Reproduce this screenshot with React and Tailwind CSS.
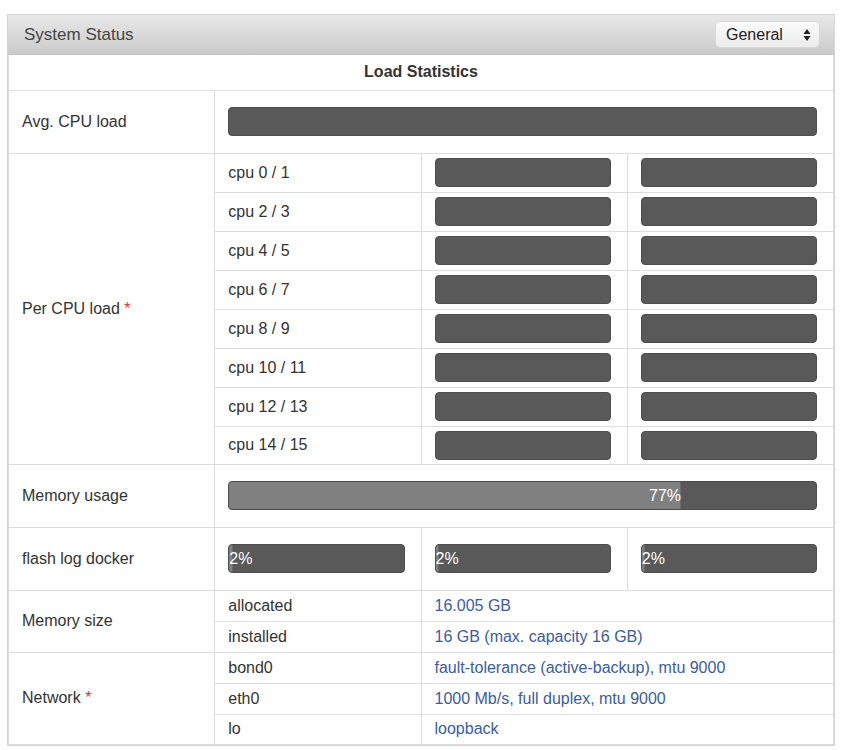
import React from "react";

const Bar = ({ pct, label, right }) => (
  <div className="relative h-[29px] rounded-[4px] bg-[#595959] border border-[#4d4d4d] overflow-hidden">
    {pct !== undefined && (
      <div
        className="absolute left-0 top-0 bottom-0 bg-[#808080] border-r border-[#6a6a6a] rounded-l-[3px] flex items-center"
        style={{ width: pct + "%" }}
      />
    )}
    {label && (
      <div
        className={
          "absolute top-0 bottom-0 flex items-center text-white text-[16px] " +
          (right ? "justify-end" : "justify-start")
        }
        style={right ? { left: 0, width: pct + "%" } : { left: 0 }}
      >
        {label}
      </div>
    )}
  </div>
);

const cell = "border border-[#dddddd] align-middle";
const barCell = cell + " pl-[13px] pr-[16px]";

export default function App() {
  const cpus = ["0 / 1", "2 / 3", "4 / 5", "6 / 7", "8 / 9", "10 / 11", "12 / 13", "14 / 15"];
  return (
    <div className="w-[842px] h-[750px] bg-white pt-[14px] pl-[7px] font-['Liberation_Sans',Arial,sans-serif] text-[16px] text-[#333333]">
      <div className="w-[828px] border border-[#d4d4d4]">
        <div className="h-[40px] bg-gradient-to-b from-[#e8e8e8] to-[#cbcbcb] flex items-center justify-between pl-[16px] pr-[14px] border-b border-[#c4c4c4]">
          <span className="text-[17px] text-[#444444]">System Status</span>
          <div className="w-[105px] h-[27px] rounded-[5px] bg-gradient-to-b from-[#fbfbfb] to-[#ececec] border border-[#d8d8d8] flex items-center justify-between pl-[10px] pr-[8px] text-[16px] text-[#222222]">
            <span>General</span>
            <svg width="8" height="14" viewBox="0 0 8 14">
              <path d="M4 1 L7.5 6 L0.5 6 Z" fill="#222" />
              <path d="M4 13 L7.5 8 L0.5 8 Z" fill="#222" />
            </svg>
          </div>
        </div>
        <table className="w-full table-fixed border-collapse">
          <colgroup>
            <col className="w-1/4" />
            <col className="w-1/4" />
            <col className="w-1/4" />
            <col className="w-1/4" />
          </colgroup>
          <tbody>
            <tr className="h-[35px]">
              <td colSpan={4} className={cell + " text-center font-bold border-t-0"}>
                Load Statistics
              </td>
            </tr>
            <tr className="h-[63px]">
              <td className={cell + " pl-[13px]"}>Avg. CPU load</td>
              <td colSpan={3} className={barCell}>
                <Bar />
              </td>
            </tr>
            {cpus.map((c, i) => (
              <tr key={c} className={i === 7 ? "h-[38px]" : "h-[39px]"}>
                {i === 0 && (
                  <td rowSpan={8} className={cell + " pl-[13px]"}>
                    Per CPU load <span className="text-[#e0313c]">*</span>
                  </td>
                )}
                <td className={cell + " pl-[13px]"}>cpu {c}</td>
                <td className={barCell}>
                  <Bar />
                </td>
                <td className={barCell}>
                  <Bar />
                </td>
              </tr>
            ))}
            <tr className="h-[63px]">
              <td className={cell + " pl-[13px]"}>Memory usage</td>
              <td colSpan={3} className={barCell}>
                <Bar pct={77} label="77%" right />
              </td>
            </tr>
            <tr className="h-[63px]">
              <td className={cell + " pl-[13px]"}>flash log docker</td>
              <td className={barCell}>
                <Bar pct={2} label="2%" />
              </td>
              <td className={barCell}>
                <Bar pct={2} label="2%" />
              </td>
              <td className={barCell}>
                <Bar pct={2} label="2%" />
              </td>
            </tr>
            <tr className="h-[31px]">
              <td rowSpan={2} className={cell + " pl-[13px]"}>Memory size</td>
              <td className={cell + " pl-[13px]"}>allocated</td>
              <td colSpan={2} className={cell + " pl-[13px] text-[#3b5ca0]"}>16.005 GB</td>
            </tr>
            <tr className="h-[31px]">
              <td className={cell + " pl-[13px]"}>installed</td>
              <td colSpan={2} className={cell + " pl-[13px] text-[#3b5ca0]"}>16 GB (max. capacity 16 GB)</td>
            </tr>
            <tr className="h-[31px]">
              <td rowSpan={3} className={cell + " pl-[13px]"}>
                Network <span className="text-[#e0313c]">*</span>
              </td>
              <td className={cell + " pl-[13px]"}>bond0</td>
              <td colSpan={2} className={cell + " pl-[13px] text-[#3b5ca0]"}>
                fault-tolerance (active-backup), mtu 9000
              </td>
            </tr>
            <tr className="h-[31px]">
              <td className={cell + " pl-[13px]"}>eth0</td>
              <td colSpan={2} className={cell + " pl-[13px] text-[#3b5ca0]"}>1000 Mb/s, full duplex, mtu 9000</td>
            </tr>
            <tr className="h-[30px]">
              <td className={cell + " pl-[13px]"}>lo</td>
              <td colSpan={2} className={cell + " pl-[13px] text-[#3b5ca0]"}>loopback</td>
            </tr>
          </tbody>
        </table>
      </div>
    </div>
  );
}
